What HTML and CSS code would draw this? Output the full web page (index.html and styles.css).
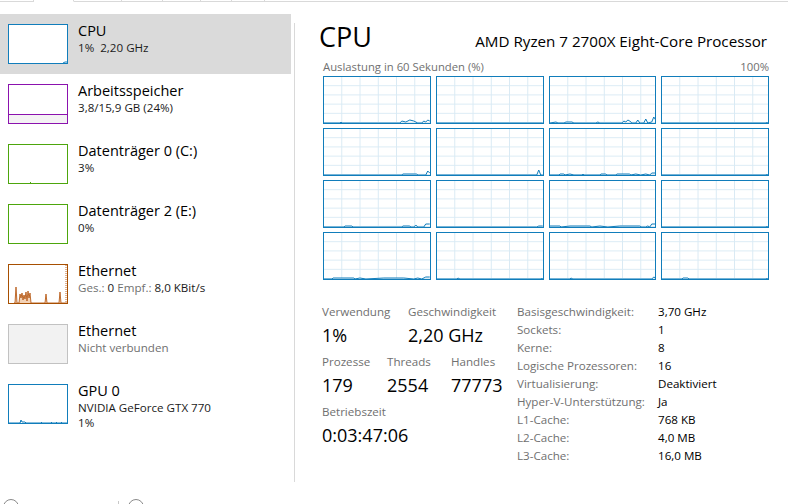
FILE: index.html
```html
<!DOCTYPE html>
<html lang="de">
<head>
<meta charset="utf-8">
<title>Task-Manager – Leistung</title>
<link rel="stylesheet" href="styles.css">
</head>
<body>
<div class="tabs">
  <span class="tab t1"></span><span class="tab tsel"></span><span class="tab t3"></span><span class="tab t4"></span><span class="tab t5"></span><span class="tab t6"></span><span class="tab t7"></span><span class="tab trest"></span>
</div>
<div class="app">
  <div class="sidebar">
    <div class="item selected">
      <div class="thumb thumb-cpu">
        <svg viewBox="0 0 58 38" preserveAspectRatio="none"><polyline points="54,38 56,37 58,37" class="ln-blue"/></svg>
      </div>
      <div class="info"><div class="title">CPU</div><div class="sub">1%&nbsp;&nbsp;2,20 GHz</div></div>
    </div>
    <div class="item">
      <div class="thumb thumb-mem"><div class="mem-fill"></div></div>
      <div class="info"><div class="title">Arbeitsspeicher</div><div class="sub">3,8/15,9 GB (24%)</div></div>
    </div>
    <div class="item">
      <div class="thumb thumb-disk"><svg viewBox="0 0 58 38" preserveAspectRatio="none"><line x1="21" y1="37.5" x2="22" y2="37.5" class="ln-green"/></svg></div>
      <div class="info"><div class="title">Datenträger 0 (C:)</div><div class="sub">3%</div></div>
    </div>
    <div class="item">
      <div class="thumb thumb-disk"></div>
      <div class="info"><div class="title">Datenträger 2 (E:)</div><div class="sub">0%</div></div>
    </div>
    <div class="item">
      <div class="thumb thumb-eth">
        <svg viewBox="0 0 58 38" preserveAspectRatio="none">
          <polyline class="spk" points="5,38 6,38 7,22 8,38 10,38 11,29 12,33 13,28 14,35 15,30 16,34 17,27 18,36 19,26 20,33 21,28 22,38 23,38 36,38 37,29 38,38 50,38 51,27 52,38 58,38"/>
          <line x1="57" y1="0" x2="57" y2="38" class="edge"/>
        </svg>
      </div>
      <div class="info"><div class="title">Ethernet</div><div class="sub"><span class="muted">Ges.:</span> 0 <span class="muted">Empf.:</span> 8,0 KBit/s</div></div>
    </div>
    <div class="item">
      <div class="thumb thumb-off"></div>
      <div class="info"><div class="title">Ethernet</div><div class="sub muted">Nicht verbunden</div></div>
    </div>
    <div class="item">
      <div class="thumb thumb-gpu">
        <svg viewBox="0 0 58 38" preserveAspectRatio="none"><polyline class="ln-blue" points="0,38 11,38 12,35 13,37 16,37 17,38 58,38"/><polyline class="ln-blue" points="32,37.5 33,37.5"/><polyline class="ln-blue" points="42,37.5 43,37.5"/><polyline class="ln-blue" points="47,37.5 48,37.5"/><polyline class="ln-blue" points="52,37.5 53,37.5"/></svg>
      </div>
      <div class="info"><div class="title">GPU 0</div><div class="sub">NVIDIA GeForce GTX 770</div><div class="sub">1%</div></div>
    </div>
  </div>
  <div class="divider"></div>
  <div class="main">
    <div class="head">
      <div class="big">CPU</div>
      <div class="model">AMD Ryzen 7 2700X Eight-Core Processor</div>
    </div>
    <div class="axis"><span>Auslastung in 60 Sekunden (%)</span><span>100%</span></div>
    <div class="graphs">
      <div class="graph"><svg viewBox="0 0 106 46" preserveAspectRatio="none"><polyline points="0,46 16,46 17,45 18,46 76,46 78,44 82,45 86,43 90,44 94,46 98,46 100,44 102,45 104,43 106,44"/></svg></div>
      <div class="graph"><svg viewBox="0 0 106 46" preserveAspectRatio="none"><polyline points="0,46 106,46"/></svg></div>
      <div class="graph"><svg viewBox="0 0 106 46" preserveAspectRatio="none"><polyline points="0,46 6,45 8,46 14,46 16,45 22,45 24,46 46,46 48,45 50,46 72,46 74,44 76,45 78,43 80,44 82,46 86,46 88,43 90,46 94,46 96,42 98,46 102,45 104,40 106,43"/></svg></div>
      <div class="graph"><svg viewBox="0 0 106 46" preserveAspectRatio="none"><polyline points="0,46 104,46 105,45 106,46"/></svg></div>
      <div class="graph"><svg viewBox="0 0 106 46" preserveAspectRatio="none"><polyline points="0,46 78,46 79,45 93,45 94,46 102,46 104,42 106,44"/></svg></div>
      <div class="graph"><svg viewBox="0 0 106 46" preserveAspectRatio="none"><polyline points="0,46 100,46 102,41 104,46 106,46"/></svg></div>
      <div class="graph"><svg viewBox="0 0 106 46" preserveAspectRatio="none"><polyline points="0,46 9,46 10,45 14,45 15,46 20,45 24,46 32,46 33,45 34,46 50,46 51,45 56,45 57,46 66,46 67,45 80,45 81,46 86,45 91,46 96,45 100,46 102,44 106,44"/></svg></div>
      <div class="graph"><svg viewBox="0 0 106 46" preserveAspectRatio="none"><polyline points="0,46 104,46 105,45 106,46"/></svg></div>
      <div class="graph"><svg viewBox="0 0 106 46" preserveAspectRatio="none"><polyline points="0,46 20,46 21,45 28,45 29,46 78,46 79,45 86,45 87,46 90,46 92,44 94,46 100,46 102,43 106,43"/></svg></div>
      <div class="graph"><svg viewBox="0 0 106 46" preserveAspectRatio="none"><polyline points="0,46 100,46 102,45 106,45"/></svg></div>
      <div class="graph"><svg viewBox="0 0 106 46" preserveAspectRatio="none"><polyline points="0,45 10,45 11,46 20,45 40,45 42,46 50,45 58,46 70,45 90,45 92,46 96,46 98,45 100,46 102,43 106,43"/></svg></div>
      <div class="graph"><svg viewBox="0 0 106 46" preserveAspectRatio="none"><polyline points="0,46 104,46 105,45 106,46"/></svg></div>
      <div class="graph"><svg viewBox="0 0 106 46" preserveAspectRatio="none"><polyline points="0,46 8,46 9,45 30,45 31,46 36,45 42,46 60,45 80,45 90,46 94,45 98,46 102,44 106,44"/></svg></div>
      <div class="graph"><svg viewBox="0 0 106 46" preserveAspectRatio="none"><polyline points="0,46 20,46 21,45 23,46 104,46 105,45 106,46"/></svg></div>
      <div class="graph"><svg viewBox="0 0 106 46" preserveAspectRatio="none"><polyline points="0,46 20,46 21,45 23,46 102,46 104,44 106,45"/></svg></div>
      <div class="graph"><svg viewBox="0 0 106 46" preserveAspectRatio="none"><polyline points="0,46 20,46 21,45 26,45 27,46 104,46 105,45 106,46"/></svg></div>
    </div>
    <div class="stats">
      <div class="stats-left">
        <div class="srow">
          <div class="stat w86"><div class="lbl">Verwendung</div><div class="val">1%</div></div>
          <div class="stat"><div class="lbl">Geschwindigkeit</div><div class="val">2,20 GHz</div></div>
        </div>
        <div class="srow">
          <div class="stat w65"><div class="lbl">Prozesse</div><div class="val">179</div></div>
          <div class="stat w64"><div class="lbl">Threads</div><div class="val">2554</div></div>
          <div class="stat"><div class="lbl">Handles</div><div class="val">77773</div></div>
        </div>
        <div class="srow">
          <div class="stat"><div class="lbl">Betriebszeit</div><div class="val">0:03:47:06</div></div>
        </div>
      </div>
      <div class="specs">
        <span class="k">Basisgeschwindigkeit:</span><span class="v">3,70 GHz</span>
        <span class="k">Sockets:</span><span class="v">1</span>
        <span class="k">Kerne:</span><span class="v">8</span>
        <span class="k">Logische Prozessoren:</span><span class="v">16</span>
        <span class="k">Virtualisierung:</span><span class="v">Deaktiviert</span>
        <span class="k">Hyper-V-Unterstützung:</span><span class="v">Ja</span>
        <span class="k">L1-Cache:</span><span class="v">768 KB</span>
        <span class="k">L2-Cache:</span><span class="v">4,0 MB</span>
        <span class="k">L3-Cache:</span><span class="v">16,0 MB</span>
      </div>
    </div>
  </div>
</div>
<div class="footer">
  <span class="circ c1"></span>
  <span class="sep"></span>
  <span class="circ c2"></span>
</div>
</body>
</html>
```

FILE: styles.css
```css
* { box-sizing: border-box; }
html, body { margin: 0; padding: 0; }
body {
  width: 788px;
  height: 504px;
  overflow: hidden;
  background: #ffffff;
  color: #000000;
  font-family: "Open Sans", "Noto Sans", "DejaVu Sans", sans-serif;
  display: flex;
  flex-direction: column;
}

/* top tab strip (cropped) */
.tabs { display: flex; height: 2px; flex: none; }
.tab { height: 2px; border-bottom: 1px solid #d9d9d9; border-right: 1px solid #d9d9d9; }
.t1 { width: 34px; }
.tsel { width: 40px; border-bottom-color: transparent; }
.t3 { width: 48px; }
.t4 { width: 41px; }
.t5 { width: 38px; }
.t6 { width: 31px; }
.t7 { width: 33px; }
.trest { flex: 1; border-right: none; }

.app { display: flex; height: 497px; flex: none; }

/* sidebar */
.sidebar { width: 291px; padding-top: 12px; flex: none; }
.item { display: flex; height: 60px; padding-left: 8px; }
.item.selected { background: #dadada; }
.thumb {
  width: 60px; height: 40px; margin-top: 10px; flex: none;
  border: 1px solid #117dbb; background: #ffffff; position: relative;
}
.thumb svg { display: block; width: 58px; height: 38px; }
.thumb-mem { border-color: #8b12ae; display: flex; flex-direction: column; justify-content: flex-end; }
.mem-fill { height: 9px; background: #f4f2f4; border-top: 1px solid #8b12ae; }
.thumb-disk { border-color: #4da60c; }
.thumb-eth { border-color: #a74f01; }
.thumb-off { border-color: #c2c2c2; background: #f2f2f2; }
.ln-blue { fill: none; stroke: #117dbb; stroke-width: 1; vector-effect: non-scaling-stroke; }
.ln-green { stroke: #4da60c; stroke-width: 1; }
.spk { fill: #f3d2b6; stroke: #b85c1a; stroke-width: 0.9; vector-effect: non-scaling-stroke; }
.edge { stroke: #c0692a; stroke-width: 1; stroke-dasharray: 1 1; vector-effect: non-scaling-stroke; }

.info { margin-left: 10px; padding-top: 6.5px; }
.title { font-size: 14.5px; line-height: 19px; color: #000; white-space: nowrap; }
.sub { font-size: 11.6px; line-height: 15.5px; color: #1a1a1a; white-space: nowrap; }
.muted { color: #707070; }

.divider { width: 1px; margin-left: 3px; margin-top: 21px; height: 459px; background: #d9d9d9; flex: none; }

/* main */
.main { flex: 1; padding: 19px 19px 0 27px; }
.head { display: flex; justify-content: space-between; align-items: baseline; }
.big { font-size: 27px; line-height: 32px; margin-left: -3px; }
.model { font-size: 15.2px; line-height: 20px; margin-right: 2px; }
.axis {
  display: flex; justify-content: space-between;
  font-size: 11.3px; line-height: 16px; color: #707070;
  margin-top: 6px; padding-left: 1px;
}
.graphs {
  margin-top: 1px; margin-left: 1px;
  display: grid;
  grid-template-columns: repeat(4, 1fr);
  grid-auto-rows: 48px;
  column-gap: 5px;
  row-gap: 4px;
}
.graph {
  border: 1px solid #117dbb;
  background-color: #ffffff;
  background-image:
    linear-gradient(to right, transparent 17px, #d9eaf4 17px, #d9eaf4 18px, transparent 18px),
    linear-gradient(to bottom, transparent 8.2px, #d9eaf4 8.2px, #d9eaf4 9.2px, transparent 9.2px);
  background-size: 18.25px 100%, 100% 9.2px;
}
.graph svg { display: block; width: 100%; height: 100%; }
.graph polyline { fill: #f1f6fa; fill-opacity: 0.6; stroke: #117dbb; stroke-width: 1; vector-effect: non-scaling-stroke; }

.stats { display: flex; margin-top: 24px; }
.stats-left { width: 195px; flex: none; }
.srow { display: flex; margin-bottom: 7px; }
.stat { white-space: nowrap; }
.w86 { width: 86px; }
.w65 { width: 65px; }
.w64 { width: 64px; }
.lbl { font-size: 11.6px; line-height: 16px; color: #707070; }
.val { font-size: 18px; line-height: 24px; margin-top: 3px; color: #000; }

.specs {
  margin-top: -1px;
  display: grid;
  grid-template-columns: 141px auto;
  grid-auto-rows: 18px;
  font-size: 11.6px; line-height: 18px;
  white-space: nowrap;
}
.specs .k { color: #707070; }
.specs .v { color: #000; }

/* footer (cropped) */
.footer { display: flex; align-items: flex-start; height: 5px; flex: none; }
.circ { width: 16px; height: 16px; border: 1px solid #8a8a8a; border-radius: 50%; flex: none; }
.c1 { margin-left: 3px; }
.sep { width: 1px; height: 3px; margin-top: 2px; margin-left: 99px; background: #c8c8c8; }
.c2 { margin-left: 9px; }
```
